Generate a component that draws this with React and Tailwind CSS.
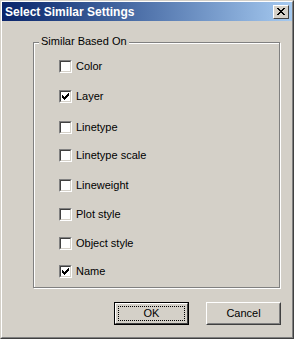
const options = [
  { label: 'Color', checked: false, mt: 'mt-[16px]' },
  { label: 'Layer', checked: true, mt: 'mt-[17px]' },
  { label: 'Linetype', checked: false, mt: 'mt-[18px]' },
  { label: 'Linetype scale', checked: false, mt: 'mt-[15px]' },
  { label: 'Lineweight', checked: false, mt: 'mt-[17px]' },
  { label: 'Plot style', checked: false, mt: 'mt-[16px]' },
  { label: 'Object style', checked: false, mt: 'mt-[16px]' },
  { label: 'Name', checked: true, mt: 'mt-[15px]' },
]

function Checkbox({ checked }) {
  return (
    <div className="w-[13px] h-[13px] border border-t-[#808080] border-l-[#808080] border-b-white border-r-white">
      <div className="w-[11px] h-[11px] bg-white border border-t-[#404040] border-l-[#404040] border-b-[#d4d0c8] border-r-[#d4d0c8] flex items-center justify-center">
        {checked && (
          <svg width="7" height="7" viewBox="0 0 7 7">
            <path d="M0 2h1v1h1v1h1v-1h1v-1h1v-1h1v-1h1v3h-1v1h-1v1h-1v1h-1v1h-1v-1h-1v-1h-1z" fill="#000" />
          </svg>
        )}
      </div>
    </div>
  )
}

function Row({ label, checked, mt }) {
  return (
    <div className={`flex items-center h-[13px] ${mt}`}>
      <Checkbox checked={checked} />
      <span className="ml-[4px] leading-none">{label}</span>
    </div>
  )
}

export default function App() {
  return (
    <div
      className="w-[294px] h-[339px] bg-[#d4d0c8] border border-t-[#d4d0c8] border-l-[#d4d0c8] border-b-[#404040] border-r-[#404040] text-[11px] text-black"
      style={{ fontFamily: '"Liberation Sans", Arial, sans-serif' }}
    >
      <div className="w-full h-full border border-t-white border-l-white border-b-[#808080] border-r-[#808080] flex flex-col">
        {/* title bar */}
        <div className="h-[19px] flex items-center justify-between bg-gradient-to-r from-[#0a246a] to-[#a6caf0] pl-[3px] pr-[3px]">
          <span className="text-white font-bold text-[12px] leading-none">Select Similar Settings</span>
          <button className="w-[16px] h-[14px] bg-[#d4d0c8] border border-t-white border-l-white border-b-[#404040] border-r-[#404040] flex items-center justify-center p-0">
            <svg width="8" height="7" viewBox="0 0 8 7">
              <path d="M0 0h2v1h1v1h2v-1h1v-1h2v1h-1v1h-1v1h-1v1h1v1h1v1h1v1h-2v-1h-1v-1h-2v1h-1v1h-2v-1h1v-1h1v-1h1v-1h-1v-1h-1v-1h-1z" fill="#000" />
            </svg>
          </button>
        </div>

        {/* group box */}
        <div className="ml-[31px] mr-[12px] mt-[21px] h-[246px] relative border border-[#808080] shadow-[inset_1px_1px_0_#fff,1px_1px_0_#fff]">
          <span className="absolute -top-[7px] left-[5px] bg-[#d4d0c8] px-[2px] leading-none">Similar Based On</span>
          <div className="pl-[25px] pt-px flex flex-col">
            {options.map((o) => (
              <Row key={o.label} {...o} />
            ))}
          </div>
        </div>

        {/* buttons */}
        <div className="flex mt-[14px] ml-[112px] gap-[17px]">
          <button className="w-[75px] h-[23px] border border-black p-0 bg-[#d4d0c8]">
            <div className="w-full h-full border border-t-white border-l-white border-b-[#404040] border-r-[#404040] p-[2px]">
              <div className="w-full h-full border border-dotted border-black flex items-center justify-center leading-none">OK</div>
            </div>
          </button>
          <button className="w-[75px] h-[23px] p-0 bg-[#d4d0c8] border border-t-white border-l-white border-b-[#404040] border-r-[#404040]">
            <div className="w-full h-full border border-t-[#d4d0c8] border-l-[#d4d0c8] border-b-[#808080] border-r-[#808080] flex items-center justify-center leading-none">Cancel</div>
          </button>
        </div>
      </div>
    </div>
  )
}
